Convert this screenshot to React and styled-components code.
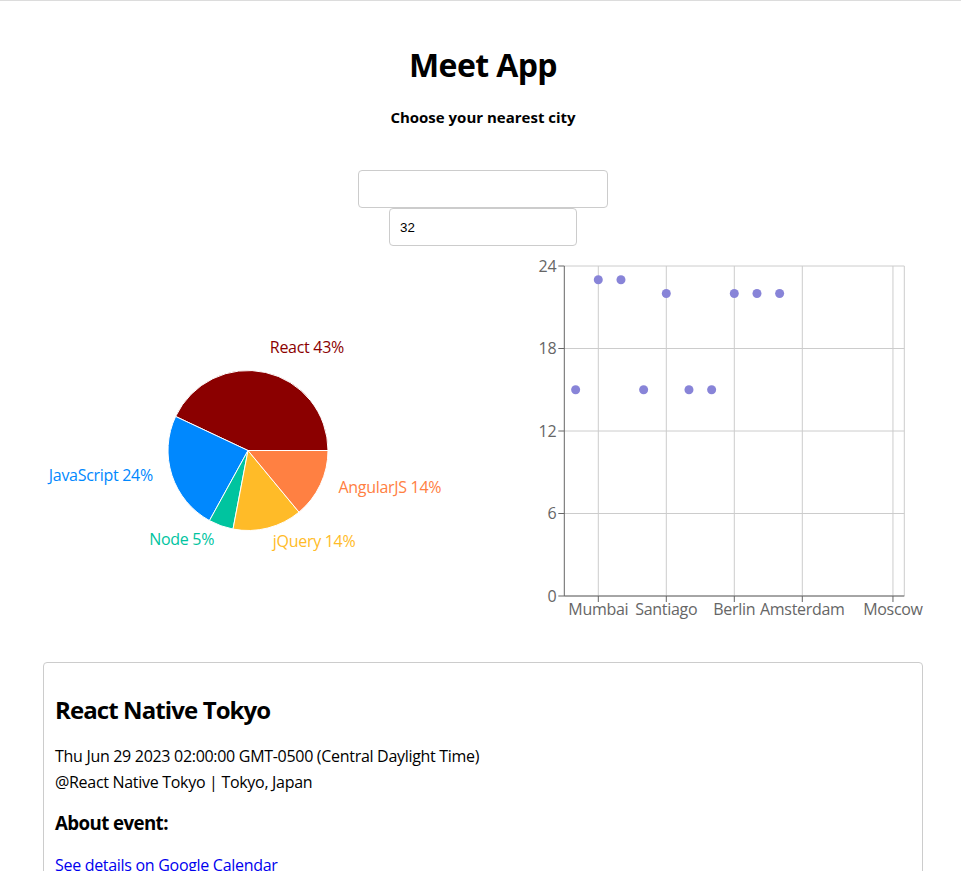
import React from "react"
import styled, { createGlobalStyle } from "styled-components"

const GlobalStyle = createGlobalStyle`
  body {
    margin: 0;
    font-family: "Open Sans", "Noto Sans", sans-serif;
    letter-spacing: -0.3px;
    color: #000;
    background: #fff;
  }
`

const theme = {
  border: "#cccccc",
  axis: "#666666",
  grid: "#cccccc",
  dot: "#8884d8",
  link: "#0000ee",
}

const skills = [
  { name: "React", value: 43, color: "#8b0000" },
  { name: "JavaScript", value: 24, color: "#0088fe" },
  { name: "Node", value: 5, color: "#00c49f" },
  { name: "jQuery", value: 14, color: "#ffbb28" },
  { name: "AngularJS", value: 14, color: "#ff8042" },
]

const cities = [
  { city: "London", count: 15 },
  { city: "Mumbai", count: 23 },
  { city: "Sydney", count: 23 },
  { city: "Toronto", count: 15 },
  { city: "Santiago", count: 22 },
  { city: "Dubai", count: 15 },
  { city: "Munich", count: 15 },
  { city: "Berlin", count: 22 },
  { city: "Rome", count: 22 },
  { city: "Paris", count: 22 },
  { city: "Amsterdam" },
  { city: "Madrid" },
  { city: "Seoul" },
  { city: "Lima" },
  { city: "Moscow" },
]

const RAD = Math.PI / 180

const SkillsPie = () => {
  const cx = 205
  const cy = 204.5
  const r = 80
  const total = skills.reduce((s, d) => s + d.value, 0)
  let start = 0
  const point = (a, rad) => [cx + rad * Math.cos(a * RAD), cy - rad * Math.sin(a * RAD)]

  return (
    <svg width="440" height="400">
      {skills.map((d) => {
        const end = start + (d.value / total) * 360
        const [x0, y0] = point(start, r)
        const [x1, y1] = point(end, r)
        const mid = (start + end) / 2
        const [lx, ly] = point(mid, r + 20)
        const large = end - start > 180 ? 1 : 0
        start = end
        return (
          <g key={d.name}>
            <path
              d={`M${cx},${cy} L${x0},${y0} A${r},${r} 0 ${large} 0 ${x1},${y1} Z`}
              fill={d.color}
              stroke="#fff"
            />
            <text
              x={lx}
              y={ly}
              fill={d.color}
              fontSize="16"
              textAnchor={lx > cx ? "start" : "end"}
            >
              {`${d.name} ${d.value}%`}
            </text>
          </g>
        )
      })}
    </svg>
  )
}

const EventsScatter = () => {
  const left = 81.3
  const top = 20
  const w = 340
  const h = 330
  const band = w / cities.length
  const x = (i) => left + (i + 0.5) * band
  const y = (v) => top + h - (v * h) / 24
  const yTicks = [0, 6, 12, 18, 24]
  const xTicks = [1, 4, 7, 10, 14]

  return (
    <svg width="440" height="400">
      <g stroke={theme.grid} fill="none">
        {yTicks.map((t) => (
          <line key={t} x1={left} x2={left + w} y1={y(t)} y2={y(t)} />
        ))}
        {xTicks.map((i) => (
          <line key={i} x1={x(i)} x2={x(i)} y1={top} y2={top + h} />
        ))}
        <line x1={left + w} x2={left + w} y1={top} y2={top + h} />
      </g>
      <g stroke={theme.axis}>
        <line x1={left} x2={left} y1={top} y2={top + h} />
        <line x1={left} x2={left + w} y1={top + h} y2={top + h} />
        {yTicks.map((t) => (
          <line key={t} x1={left - 6} x2={left} y1={y(t)} y2={y(t)} />
        ))}
        {xTicks.map((i) => (
          <line key={i} x1={x(i)} x2={x(i)} y1={top + h} y2={top + h + 6} />
        ))}
      </g>
      <g fill={theme.axis} fontSize="16">
        {yTicks.map((t) => (
          <text key={t} x={left - 8} y={y(t) + 5.7} textAnchor="end">
            {t}
          </text>
        ))}
        {xTicks.map((i) => (
          <text key={i} x={x(i)} y={top + h + 19.4} textAnchor="middle">
            {cities[i].city}
          </text>
        ))}
      </g>
      <g fill={theme.dot}>
        {cities.map((c, i) =>
          c.count ? <circle key={c.city} cx={x(i)} cy={y(c.count)} r="4.5" /> : null
        )}
      </g>
    </svg>
  )
}

const App = () => {
  return (
    <Page>
      <GlobalStyle />
      <Title>Meet App</Title>
      <Subtitle>Choose your nearest city</Subtitle>
      <SearchBox>
        <CityInput type="text" />
        <NumberInput type="number" defaultValue={32} />
      </SearchBox>
      <ChartsRow>
        <ChartBox>
          <SkillsPie />
        </ChartBox>
        <ChartBox>
          <EventsScatter />
        </ChartBox>
      </ChartsRow>
      <EventCard>
        <EventTitle>React Native Tokyo</EventTitle>
        <EventLine>Thu Jun 29 2023 02:00:00 GMT-0500 (Central Daylight Time)</EventLine>
        <EventLine>@React Native Tokyo | Tokyo, Japan</EventLine>
        <AboutTitle>About event:</AboutTitle>
        <DetailsLink href="#">See details on Google Calendar</DetailsLink>
      </EventCard>
    </Page>
  )
}
export default App

const Page = styled.div`
  border-top: 1px solid #dcdcdc;
  padding: 0 38px 40px 43px;
  text-align: center;
`

const Title = styled.h1`
  margin: 44px 0 0;
  font-size: 32px;
  line-height: 40px;
  font-weight: 700;
  letter-spacing: -0.6px;
`

const Subtitle = styled.h4`
  margin: 22px 0 0;
  font-size: 15px;
  line-height: 20px;
  font-weight: 700;
  letter-spacing: 0;
`

const SearchBox = styled.div`
  display: flex;
  flex-direction: column;
  align-items: center;
  margin-top: 43px;
`

const CityInput = styled.input`
  box-sizing: border-box;
  width: 250px;
  height: 38px;
  border: 1px solid ${theme.border};
  border-radius: 4px;
  padding: 0 10px;
  font: 13.33px "Liberation Sans", Arial, sans-serif;
  letter-spacing: 0;
`

const NumberInput = styled(CityInput)`
  width: 188px;
  -moz-appearance: textfield;
  &::-webkit-inner-spin-button,
  &::-webkit-outer-spin-button {
    -webkit-appearance: none;
    margin: 0;
  }
`

const ChartsRow = styled.div`
  display: grid;
  grid-template-columns: 440px 440px;
  height: 400px;
`

const ChartBox = styled.div`
  svg {
    display: block;
    overflow: visible;
    font-family: "Open Sans", "Noto Sans", sans-serif;
  }
`

const EventCard = styled.div`
  box-sizing: border-box;
  width: 880px;
  margin-top: 16px;
  padding: 31px 11px 20px;
  border: 1px solid ${theme.border};
  border-radius: 4px;
  text-align: left;
`

const EventTitle = styled.h2`
  margin: 0 0 17px;
  font-size: 24px;
  line-height: 32px;
  font-weight: 700;
  letter-spacing: -0.9px;
`

const EventLine = styled.p`
  margin: 0;
  font-size: 16px;
  line-height: 26px;
`

const AboutTitle = styled.h3`
  margin: 16px 0 17px;
  font-size: 18.72px;
  line-height: 24px;
  font-weight: 700;
  letter-spacing: -0.6px;
`

const DetailsLink = styled.a`
  display: block;
  font-size: 16px;
  line-height: 26px;
  color: ${theme.link};
  text-decoration: none;
`
